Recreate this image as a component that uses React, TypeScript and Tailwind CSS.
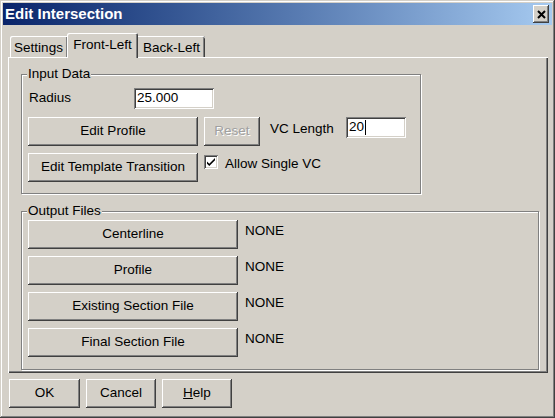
import type { ReactNode } from 'react';

const raised =
  'shadow-[inset_-1px_-1px_#404040,inset_1px_1px_#ffffff,inset_-2px_-2px_#808080,inset_2px_2px_#d4d0c8]';
const sunken =
  'shadow-[inset_1px_1px_#808080,inset_-1px_-1px_#ffffff,inset_2px_2px_#404040,inset_-2px_-2px_#d4d0c8]';

function Button({ className, children, disabled }: { className: string; children: ReactNode; disabled?: boolean }) {
  return (
    <div
      className={`flex h-[29px] shrink-0 items-center justify-center bg-[#d4d0c8] ${raised} ${className} ${
        disabled ? 'text-[#a0a0a0] [text-shadow:1px_1px_#ffffff]' : 'text-black'
      }`}
    >
      {children}
    </div>
  );
}

function GroupBox({ label, className, children }: { label: string; className: string; children: ReactNode }) {
  return (
    <div className={`relative border border-[#808080] shadow-[inset_1px_1px_#ffffff,1px_1px_#ffffff] ${className}`}>
      <span className="absolute -top-[8px] left-[5px] bg-[#d4d0c8] px-[1px] leading-[14px]">{label}</span>
      {children}
    </div>
  );
}

function Field({ className, value, caret }: { className: string; value: string; caret?: boolean }) {
  return (
    <div className={`flex h-[21px] shrink-0 items-center bg-white pl-[3px] ${sunken} ${className}`}>
      <span>{value}</span>
      {caret && <span className="ml-[1px] h-[15px] w-[1px] bg-black" />}
    </div>
  );
}

export default function App() {
  return (
    <div className="h-[418px] w-[555px] bg-[#d4d0c8] px-[3px] pt-[3px] font-['Liberation_Sans',Arial,sans-serif] text-[13.5px] text-black shadow-[inset_-1px_-1px_#404040,inset_1px_1px_#d4d0c8,inset_-2px_-2px_#808080,inset_2px_2px_#ffffff]">
      {/* caption */}
      <div className="flex h-[22px] items-center justify-between bg-gradient-to-r from-[#0a246a] to-[#a6caf0] pl-[2px] pr-[3px]">
        <span className="text-[15px] font-bold text-white">Edit Intersection</span>
        <div className={`flex h-[18px] w-[16px] items-center justify-center bg-[#d4d0c8] ${raised}`}>
          <svg width="9" height="9" viewBox="0 0 9 9">
            <path d="M1 1L8 8M8 1L1 8" stroke="#000" strokeWidth="2" />
          </svg>
        </div>
      </div>

      {/* tabs */}
      <div className="ml-[5px] mt-[8px] flex h-[24px] items-end pl-[2px]">
        <div className="flex h-[21px] w-[57px] items-start justify-center rounded-tl-[2px] pt-[2px] shadow-[inset_1px_1px_#ffffff,inset_-1px_0_#808080]">
          Settings
        </div>
        <div className="relative z-10 -mb-[1px] flex h-[25px] w-[71px] items-start justify-center rounded-t-[2px] bg-[#d4d0c8] pt-[2px] shadow-[inset_1px_1px_#ffffff,inset_-1px_0_#404040,inset_-2px_0_#808080]">
          Front-Left
        </div>
        <div className="flex h-[21px] w-[67px] items-start justify-center rounded-tr-[2px] pt-[2px] shadow-[inset_0_1px_#ffffff,inset_-1px_0_#404040,inset_-2px_0_#808080]">
          Back-Left
        </div>
      </div>

      {/* tab page */}
      <div className="ml-[5px] h-[316px] w-[540px] pl-[13px] pt-[17px] shadow-[inset_1px_1px_#ffffff,inset_-1px_-1px_#404040,inset_-2px_-2px_#808080]">
        <GroupBox label="Input Data" className="h-[120px] w-[400px]">
          <div className="ml-[6px] mt-[13px] flex items-center">
            <span className="w-[106px] pl-[1px]">Radius</span>
            <Field className="w-[80px]" value="25.000" />
          </div>
          <div className="ml-[6px] mt-[8px] flex items-start">
            <Button className="w-[170px]">Edit Profile</Button>
            <Button className="ml-[6px] w-[56px]" disabled>
              Reset
            </Button>
            <span className="ml-[10px] mt-[2px] w-[76px]">VC Length</span>
            <Field className="w-[60px]" value="20" caret />
          </div>
          <div className="ml-[6px] mt-[7px] flex items-start">
            <Button className="w-[170px]">Edit Template Transition</Button>
            <div className={`ml-[6px] mt-[2px] flex h-[14px] w-[14px] items-center justify-center bg-white ${sunken}`}>
              <svg width="8" height="8" viewBox="0 0 7 7">
                <path d="M0 3L0 5L2 7L7 2L7 0L2 5Z" fill="#000" />
              </svg>
            </div>
            <span className="ml-[7px] mt-[1px]">Allow Single VC</span>
          </div>
        </GroupBox>

        <GroupBox label="Output Files" className="mt-[17px] h-[159px] w-[518px]">
          <div className="ml-[6px] mt-[8px] flex flex-col gap-[7px]">
            {['Centerline', 'Profile', 'Existing Section File', 'Final Section File'].map((name) => (
              <div key={name} className="flex items-start">
                <Button className="w-[210px]">{name}</Button>
                <span className="ml-[7px] mt-[1px]">NONE</span>
              </div>
            ))}
          </div>
        </GroupBox>
      </div>

      {/* dialog buttons */}
      <div className="ml-[6px] mt-[6px] flex gap-[6px]">
        <Button className="w-[71px]">OK</Button>
        <Button className="w-[70px]">Cancel</Button>
        <Button className="w-[70px]">
          <span>
            <span className="underline">H</span>elp
          </span>
        </Button>
      </div>
    </div>
  );
}
